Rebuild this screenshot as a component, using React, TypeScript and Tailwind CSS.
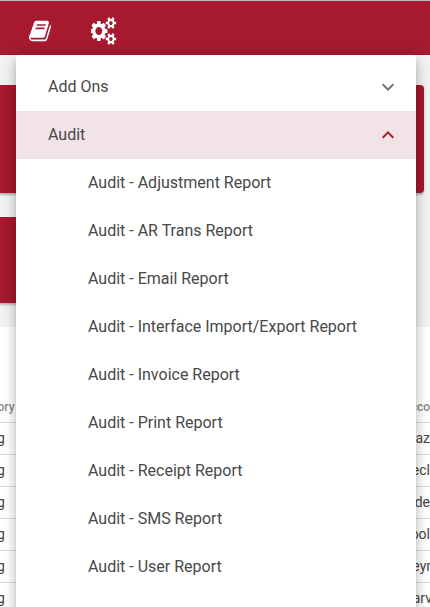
const items = [
  "Audit - Adjustment Report",
  "Audit - AR Trans Report",
  "Audit - Email Report",
  "Audit - Interface Import/Export Report",
  "Audit - Invoice Report",
  "Audit - Print Report",
  "Audit - Receipt Report",
  "Audit - SMS Report",
  "Audit - User Report",
];

const rows = [
  { t: "az", c: "" },
  { t: "ecl", c: "" },
  { t: "de", c: "" },
  { t: "ool", c: "" },
  { t: "eyn", c: "-mr-[4px]" },
  { t: "arv", c: "-mr-[2px]" },
];

function Book() {
  return (
    <svg viewBox="0 0 1664 1792" preserveAspectRatio="none" className="w-[22px] h-[24px]" fill="#fff">
      <path d="M1639 478q40 57 18 129l-275 906q-19 64-76.5 107.5t-122.5 43.5h-923q-77 0-148.5-53.5t-99.5-131.5q-24-67-2-127 0-4 3-27t4-37q1-8-3-21.5t-3-19.5q2-11 8-21t16.5-23.5 16.5-23.5q23-38 45-91.5t30-91.5q3-10 .5-30t-.5-28q3-11 17-28t17-23q21-36 42-92t25-90q1-9-2.5-32t.5-28q4-13 22-30.5t22-22.5q19-26 42.5-84.5t27.5-96.5q1-8-3-25.5t-2-26.5q2-8 9-18t18-23 17-21q8-12 16.5-30.5t15-35 16-36 19.5-32 26.5-23.5 36-11.5 47.5 5.5l-1 3q38-9 51-9h761q74 0 114 56t18 130l-274 906q-36 119-71.5 153.5t-128.5 34.5h-869q-27 0-38 15-11 16-1 43 24 70 144 70h923q29 0 56-15.5t35-41.5l300-987q7-22 5-57 38 15 59 43zm-1064 2q-4 13 2 22.5t20 9.5h608q13 0 25.5-9.5t16.5-22.5l21-64q4-13-2-22.5t-20-9.5h-608q-13 0-25.5 9.5t-16.5 22.5zm-83 256q-4 13 2 22.5t20 9.5h608q13 0 25.5-9.5t16.5-22.5l21-64q4-13-2-22.5t-20-9.5h-608q-13 0-25.5 9.5t-16.5 22.5z" />
    </svg>
  );
}

function Cogs() {
  return (
    <svg viewBox="0 0 1920 1792" preserveAspectRatio="none" className="w-[26px] h-[28px]" fill="#fff">
      <path d="M832 896q0-106-75-181t-181-75-181 75-75 181 75 181 181 75 181-75 75-181zm768 512q0-52-38-90t-90-38-90 38-38 90q0 53 37.5 90.5t90.5 37.5 90.5-37.5 37.5-90.5zm0-1024q0-52-38-90t-90-38-90 38-38 90q0 53 37.5 90.5t90.5 37.5 90.5-37.5 37.5-90.5zm-384 421v185q0 10-7 19.5t-16 10.5l-155 24q-11 35-32 76 34 48 90 115 7 11 7 20 0 12-7 19-23 30-82.5 89.5t-78.5 59.5q-11 0-21-7l-115-90q-37 19-77 31-11 108-23 155-7 24-30 24h-186q-11 0-20-7.5t-10-17.5l-23-153q-34-10-75-31l-118 89q-7 7-20 7-11 0-21-8-144-133-144-160 0-9 7-19 10-14 41-53t47-61q-23-44-35-82l-152-24q-10-1-17-9.5t-7-19.5v-185q0-10 7-19.5t16-10.5l155-24q11-35 32-76-34-48-90-115-7-11-7-20 0-12 7-20 22-30 82-89t79-59q11 0 21 7l115 90q34-18 77-32 11-108 23-154 7-24 30-24h186q11 0 20 7.5t10 17.5l23 153q34 10 75 31l118-89q8-7 20-7 11 0 21 8 144 133 144 160 0 8-7 19-12 16-42 54t-45 60q23 48 34 82l152 23q10 2 17 10.5t7 19.5zm640 533v140q0 16-149 31-12 27-30 52 51 113 51 138 0 4-4 7-122 71-124 71-8 0-46-47t-52-68q-20 2-30 2t-30-2q-14 21-52 68t-46 47q-2 0-124-71-4-3-4-7 0-25 51-138-18-25-30-52-149-15-149-31v-140q0-16 149-31 13-29 30-52-51-113-51-138 0-4 4-7 4-2 35-20t59-34 30-16q8 0 46 46.5t52 67.5q20-2 30-2t30 2q51-71 92-112l6-2q4 0 124 70 4 3 4 7 0 25-51 138 17 23 30 52 149 15 149 31zm0-1024v140q0 16-149 31-12 27-30 52 51 113 51 138 0 4-4 7-122 71-124 71-8 0-46-47t-52-68q-20 2-30 2t-30-2q-14 21-52 68t-46 47q-2 0-124-71-4-3-4-7 0-25 51-138-18-25-30-52-149-15-149-31v-140q0-16 149-31 13-29 30-52-51-113-51-138 0-4 4-7 4-2 35-20t59-34 30-16q8 0 46 46.5t52 67.5q20-2 30-2t30 2q51-71 92-112l6-2q4 0 124 70 4 3 4 7 0 25-51 138 17 23 30 52 149 15 149 31z" />
    </svg>
  );
}

function Chevron({ up }: { up?: boolean }) {
  return (
    <svg viewBox="0 0 24 24" className={up ? "w-[24px] h-[24px] rotate-180 text-[#a6192e]" : "w-[24px] h-[24px] text-[#757575]"} fill="currentColor">
      <path d="M16.59 8.59 12 13.17 7.41 8.59 6 10l6 6 6-6z" />
    </svg>
  );
}

export default function App() {
  return (
    <div className="relative w-[430px] h-[607px] overflow-hidden bg-white font-['Roboto',sans-serif]">
      <div className="h-[55px] bg-[#a6192e] border-t border-[#bdbdbd] flex items-center pl-[29px] gap-[40px] pt-[6px]">
        <Book />
        <Cogs />
      </div>
      <div className="bg-[#f2f2f2] h-[272px] pt-[30px] flex flex-col gap-[24px]">
        <div className="h-[108px] w-[424px] bg-[#a6192e] rounded-r shadow-[0_2px_2px_rgba(0,0,0,0.25)]" />
        <div className="h-[86px] w-[360px] bg-[#a6192e] shadow-[0_2px_2px_rgba(0,0,0,0.25)]" />
      </div>
      <div className="pt-[65px]">
        <div className="h-[30px] flex justify-between items-center text-[12px] font-medium text-[#8a8a8a] whitespace-nowrap">
          <span className="-ml-[34px]">Category</span>
          <span>Acco</span>
        </div>
        {rows.map((r) => (
          <div key={r.t} className="h-[32px] border-t border-[#dcdcdc] flex justify-between items-center text-[14px] text-[#444] whitespace-nowrap">
            <span className="-ml-[3px]">g</span>
            <span className={r.c}>{r.t}</span>
          </div>
        ))}
      </div>
      <div className="absolute left-[16px] top-[55px] w-[400px] h-[560px] bg-white rounded pt-[8px] shadow-[0_5px_5px_-3px_rgba(0,0,0,0.2),0_8px_10px_1px_rgba(0,0,0,0.14),0_3px_14px_2px_rgba(0,0,0,0.12)] text-[16px] text-[#484848]">
        <div className="h-[48px] pl-[32px] pr-[16px] flex items-center justify-between">
          <span>Add Ons</span>
          <Chevron />
        </div>
        <div className="h-[48px] pl-[32px] pr-[16px] flex items-center justify-between bg-[#f2e3e6]">
          <span>Audit</span>
          <Chevron up />
        </div>
        {items.map((t) => (
          <div key={t} className="h-[48px] pl-[72px] flex items-center">{t}</div>
        ))}
      </div>
    </div>
  );
}
